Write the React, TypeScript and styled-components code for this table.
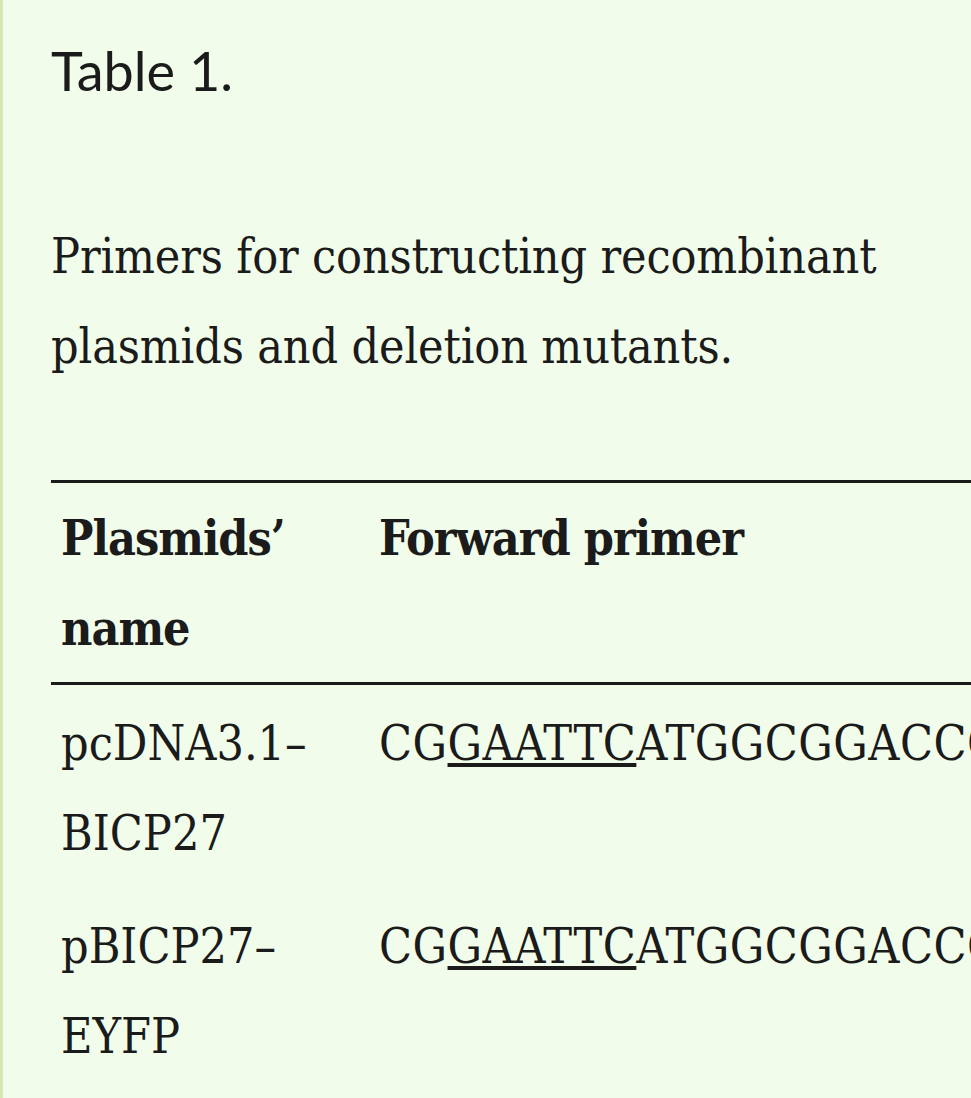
import React from "react";
import styled, { createGlobalStyle } from "styled-components";

const GlobalStyle = createGlobalStyle`
  html, body {
    margin: 0;
    padding: 0;
    overflow: hidden;
    background: #f1fdea;
  }
  #root {
    min-height: 100vh;
  }
`;

const Panel = styled.section`
  box-sizing: border-box;
  min-height: 100vh;
  width: 100%;
  overflow: hidden;
  background: #f1fdea;
  border-left: 3px solid #d7e9b3;
  padding: 39px 0 40px 48px;
  color: #1b1b1b;
`;

const Title = styled.h3`
  margin: 0;
  font-family: Lato, "Open Sans", sans-serif;
  font-weight: 400;
  font-size: 54px;
  line-height: 64.8px;
`;

const Caption = styled.p`
  margin: 107px 40px 0 0;
  font-family: "DejaVu Serif Condensed", "DejaVu Serif", serif;
  font-size: 48px;
  line-height: 90px;
  letter-spacing: -0.15px;
`;

const Table = styled.table`
  margin-top: 89px;
  border-collapse: collapse;
  table-layout: fixed;
  width: 2118px;
  font-family: "DejaVu Serif Condensed", "DejaVu Serif", serif;
  font-size: 48px;
  line-height: 90px;
`;

const Column = styled.col<{ $width: number }>`
  width: ${(p) => p.$width}px;
`;

const HeadRow = styled.tr`
  border-top: 3px solid #1b1b1b;
  border-bottom: 3px solid #1b1b1b;
`;

const HeadCell = styled.th`
  text-align: left;
  vertical-align: top;
  font-weight: 700;
  letter-spacing: -1px;
  padding: 10px 10px 9px 10px;
`;

const Cell = styled.td`
  vertical-align: top;
  padding: 13px 10px 10px 10px;
`;

const Sequence = styled.span`
  white-space: nowrap;
  letter-spacing: 0.5px;
`;

const Site = styled.span`
  text-decoration: underline;
  text-decoration-thickness: 4px;
  text-underline-offset: 3px;
`;

type Primer = { pre: string; site: string; post: string };
type Row = { name: string[]; fwd: Primer; rev: Primer };

const rows: Row[] = [
  {
    name: ["pcDNA3.1–", "BICP27"],
    fwd: { pre: "CG", site: "GAATTC", post: "ATGGCGGACCCCGCGGAGC" },
    rev: { pre: "CG", site: "CTCGAG", post: "TCAGGTGGCGCCCAGGAAG" },
  },
  {
    name: ["pBICP27–", "EYFP"],
    fwd: { pre: "CG", site: "GAATTC", post: "ATGGCGGACCCCGCGGAGC" },
    rev: { pre: "CG", site: "GGATCC", post: "CGGGTGGCGCCCAGGAAGC" },
  },
];

function PrimerText({ p }: { p: Primer }) {
  return (
    <Sequence>
      {p.pre}
      <Site>{p.site}</Site>
      {p.post}
    </Sequence>
  );
}

export default function App() {
  return (
    <>
      <GlobalStyle />
      <Panel>
        <Title>Table 1.</Title>
        <Caption>Primers for constructing recombinant plasmids and deletion mutants.</Caption>
        <Table>
          <colgroup>
            <Column $width={318} />
            <Column $width={900} />
            <Column $width={900} />
          </colgroup>
          <thead>
            <HeadRow>
              <HeadCell>
                Plasmids’
                <br />
                name
              </HeadCell>
              <HeadCell>Forward primer</HeadCell>
              <HeadCell>Reverse primer</HeadCell>
            </HeadRow>
          </thead>
          <tbody>
            {rows.map((r) => (
              <tr key={r.name.join("")}>
                <Cell>
                  {r.name[0]}
                  <br />
                  {r.name[1]}
                </Cell>
                <Cell>
                  <PrimerText p={r.fwd} />
                </Cell>
                <Cell>
                  <PrimerText p={r.rev} />
                </Cell>
              </tr>
            ))}
          </tbody>
        </Table>
      </Panel>
    </>
  );
}
